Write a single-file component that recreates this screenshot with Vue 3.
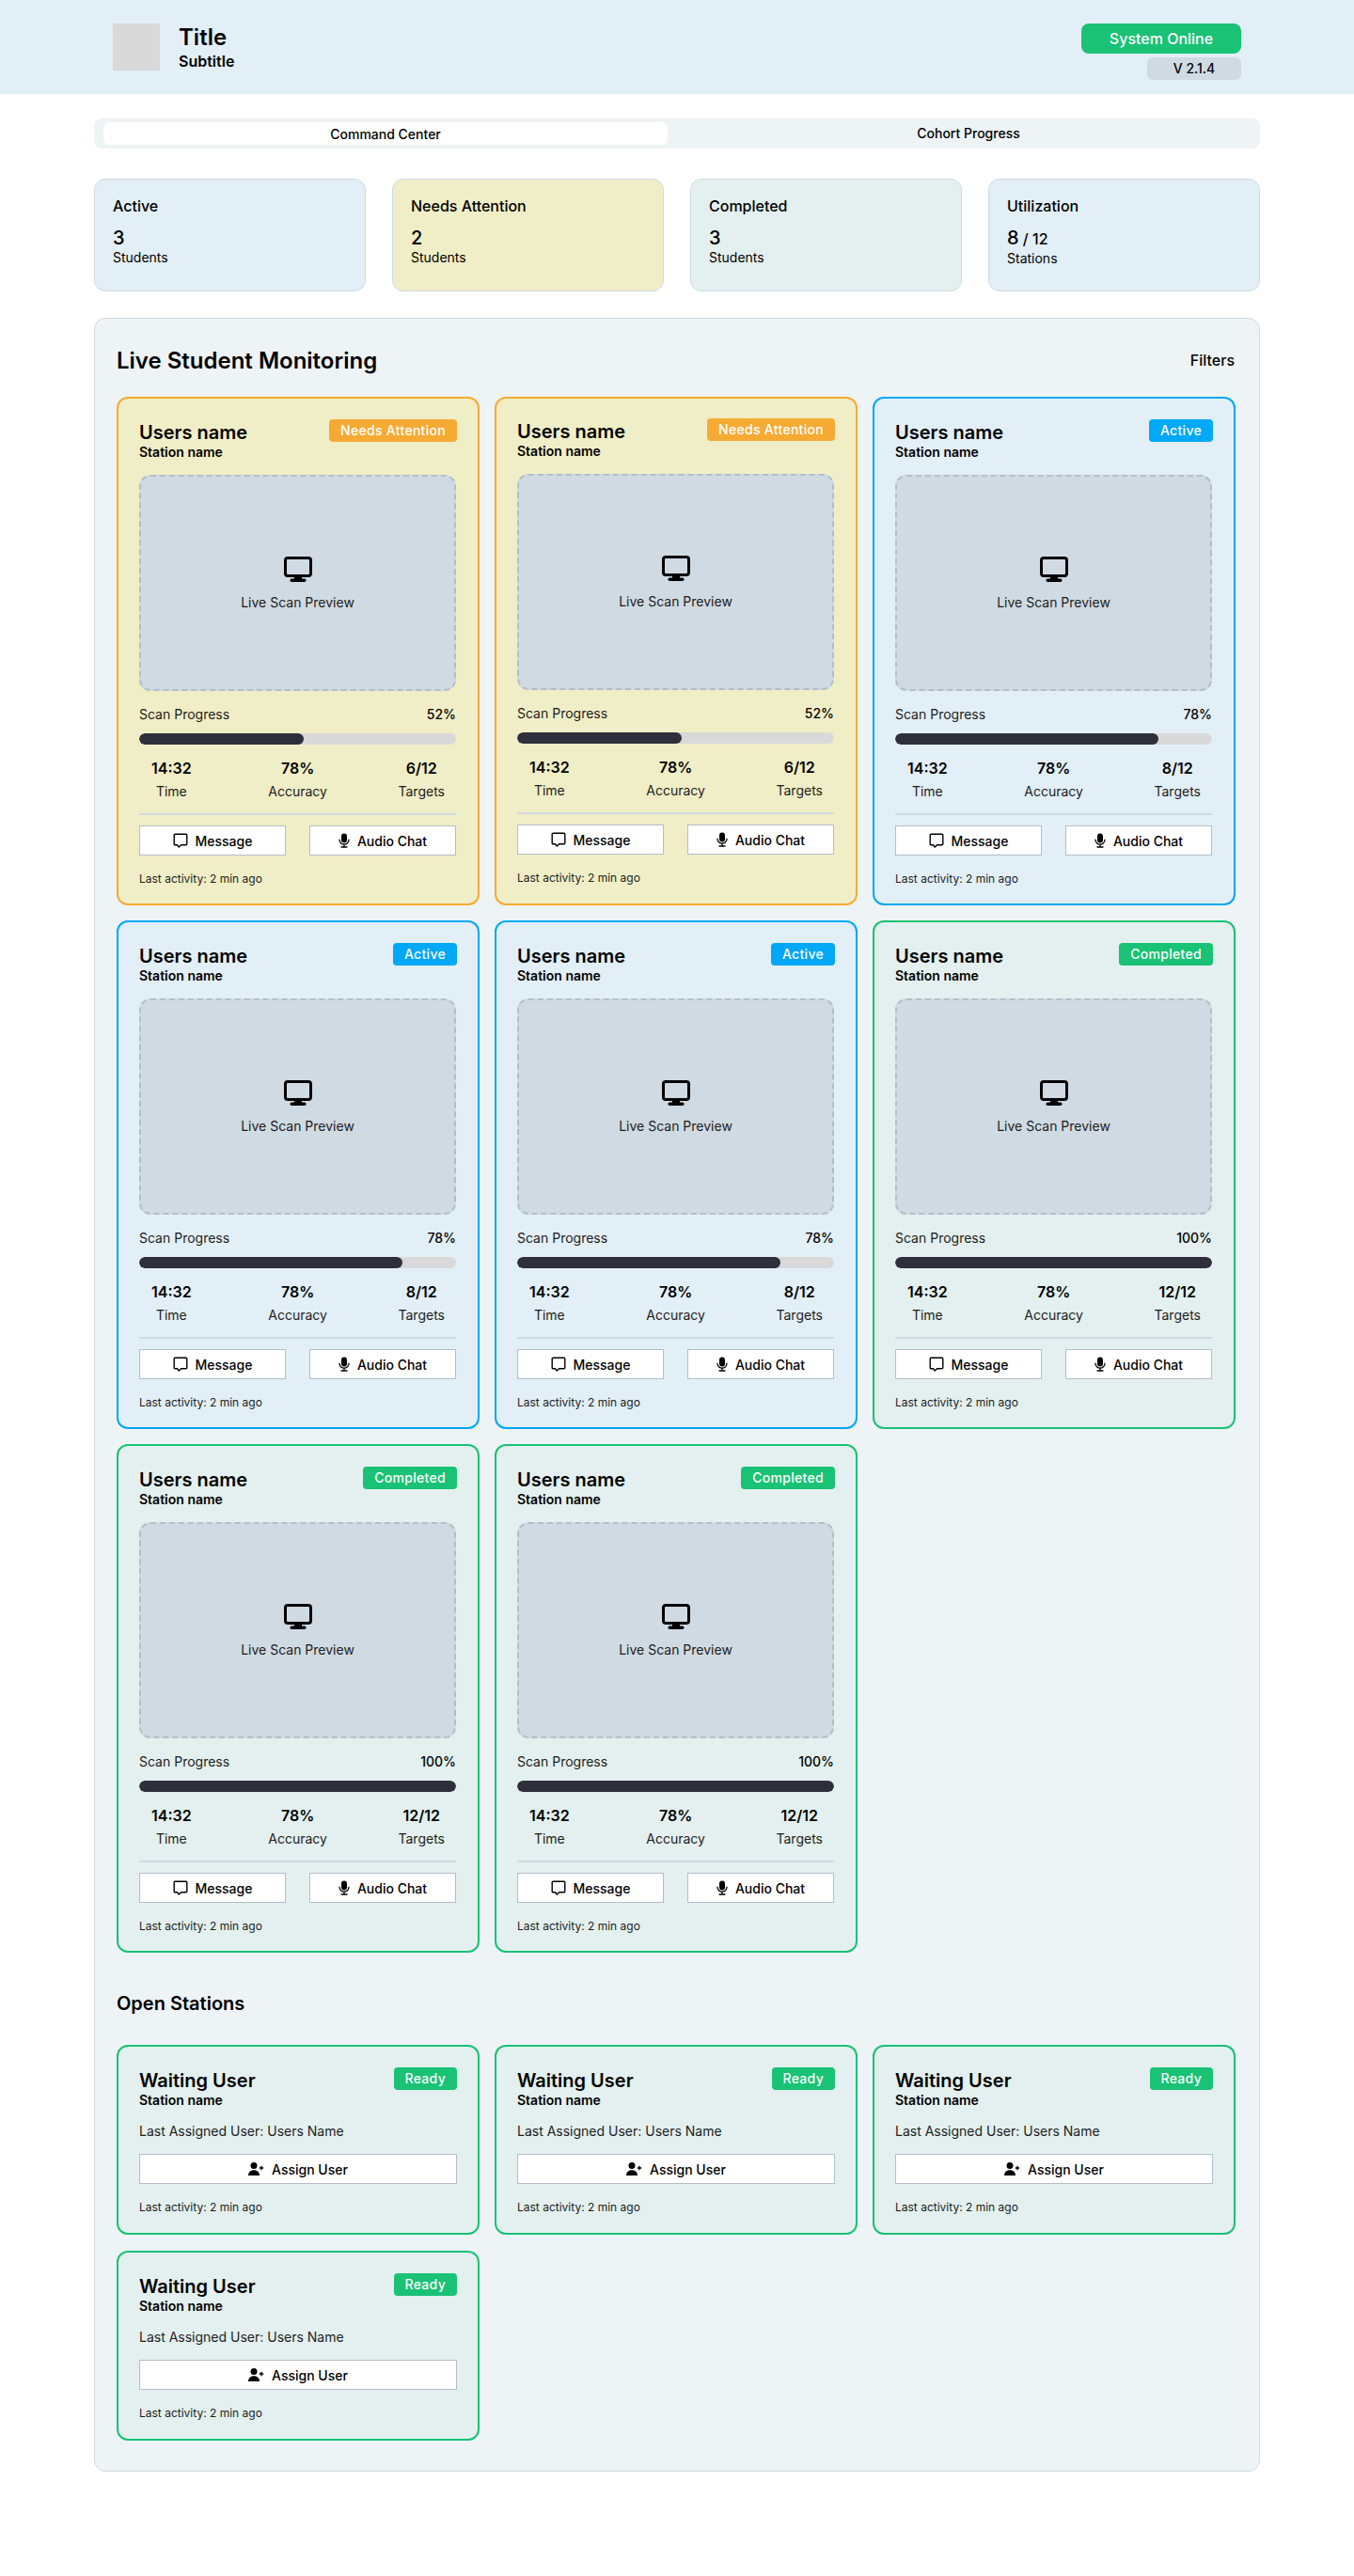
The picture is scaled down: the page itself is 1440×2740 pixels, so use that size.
<template>
  <div class="page">
    <header class="top">
      <div class="brand">
        <div class="logo"></div>
        <div class="brand-text">
          <h1>Title</h1>
          <p>Subtitle</p>
        </div>
      </div>
      <div class="status">
        <div class="online">System Online</div>
        <div class="version">V 2.1.4</div>
      </div>
    </header>

    <main class="content">
      <nav class="tabs">
        <div class="tab on">Command Center</div>
        <div class="tab">Cohort Progress</div>
      </nav>

      <section class="stats">
        <div v-for="s in stats" :key="s.label" class="stat" :class="s.tone">
          <div class="stat-label">{{ s.label }}</div>
          <div class="stat-num">{{ s.num }}<small v-if="s.of"> / {{ s.of }}</small></div>
          <div class="stat-unit">{{ s.unit }}</div>
        </div>
      </section>

      <section class="panel">
        <div class="panel-head">
          <h2>Live Student Monitoring</h2>
          <span class="filters">Filters</span>
        </div>

        <div class="grid students">
          <article v-for="(c, i) in students" :key="i" class="card" :class="c.tone">
            <div class="card-head">
              <div class="who">
                <div class="name">Users name</div>
                <div class="station">Station name</div>
              </div>
              <span class="badge">{{ c.label }}</span>
            </div>

            <div class="preview">
              <svg width="30" height="28" viewBox="0 0 30 28" fill="none">
                <rect x="1.5" y="1.5" width="27" height="19" rx="2.5" stroke="currentColor" stroke-width="3" />
                <path d="M11 21.5h8v2.5h-8z" fill="currentColor" />
                <rect x="6.5" y="23.5" width="17" height="3.5" rx="1.75" fill="currentColor" />
              </svg>
              <span>Live Scan Preview</span>
            </div>

            <div class="progress-row">
              <span>Scan Progress</span>
              <b>{{ c.progress }}%</b>
            </div>
            <div class="track">
              <div class="fill" :style="{ width: c.bar + '%' }"></div>
            </div>

            <div class="metrics">
              <div><b>14:32</b><span>Time</span></div>
              <div><b>78%</b><span>Accuracy</span></div>
              <div><b>{{ c.targets }}/12</b><span>Targets</span></div>
            </div>

            <div class="actions">
              <button>
                <svg width="16" height="16" viewBox="0 0 16 16" fill="none">
                  <path d="M2.2 1.2h11.6a1 1 0 0 1 1 1v9.6a1 1 0 0 1-1 1H8.6l-2.3 2.2-1.8-2.2H2.2a1 1 0 0 1-1-1V2.2a1 1 0 0 1 1-1z" stroke="currentColor" stroke-width="1.4" stroke-linejoin="round" />
                </svg>
                Message
              </button>
              <button>
                <svg width="12" height="16" viewBox="0 0 12 16" fill="none">
                  <rect x="3" y="0.5" width="6" height="10" rx="3" fill="currentColor" />
                  <path d="M1 7.2a5 5 0 0 0 10 0M6 12.2v2.3M3 15h6" stroke="currentColor" stroke-width="1.3" stroke-linecap="round" />
                </svg>
                Audio Chat
              </button>
            </div>

            <div class="activity">Last activity: 2 min ago</div>
          </article>
        </div>

        <h3>Open Stations</h3>

        <div class="grid open">
          <article v-for="n in 4" :key="n" class="card completed">
            <div class="card-head">
              <div class="who">
                <div class="name">Waiting User</div>
                <div class="station">Station name</div>
              </div>
              <span class="badge">Ready</span>
            </div>
            <div class="assigned">Last Assigned User: Users Name</div>
            <button class="assign">
              <svg width="17" height="14" viewBox="0 0 17 14" fill="none">
                <circle cx="6" cy="3.6" r="3.5" fill="currentColor" />
                <path d="M0 14c0-3.6 2.4-5.8 6-5.8s6 2.2 6 5.8z" fill="currentColor" />
                <path d="M14 3.8v4.4M11.8 6h4.4" stroke="currentColor" stroke-width="1.3" />
              </svg>
              Assign User
            </button>
            <div class="activity">Last activity: 2 min ago</div>
          </article>
        </div>
      </section>
    </main>
  </div>
</template>

<script setup>
const stats = [
  { label: 'Active', num: 3, unit: 'Students', tone: 'active' },
  { label: 'Needs Attention', num: 2, unit: 'Students', tone: 'attention' },
  { label: 'Completed', num: 3, unit: 'Students', tone: 'completed' },
  { label: 'Utilization', num: 8, of: 12, unit: 'Stations', tone: 'active' }
]

const attention = { tone: 'attention', label: 'Needs Attention', progress: 52, bar: 52, targets: 6 }
const active = { tone: 'active', label: 'Active', progress: 78, bar: 83, targets: 8 }
const completed = { tone: 'completed', label: 'Completed', progress: 100, bar: 100, targets: 12 }

const students = [attention, attention, active, active, active, completed, completed, completed]
</script>

<style>
body {
  margin: 0;
  background: #fff;
}
</style>

<style scoped>
.page {
  min-height: 2740px;
  font-family: Inter, "Liberation Sans", sans-serif;
  color: #000;
}

.top {
  height: 100px;
  box-sizing: border-box;
  padding: 25px 120px 0;
  display: flex;
  justify-content: space-between;
  align-items: flex-start;
  background: #e2eff7;
}

.brand {
  display: flex;
  gap: 20px;
  align-items: center;
}

.logo {
  width: 50px;
  height: 50px;
  background: #d9d9d9;
}

.brand-text {
  display: flex;
  flex-direction: column;
  gap: 2px;
}

h1 {
  margin: 0;
  font-size: 24px;
  line-height: 29px;
  font-weight: 600;
}

.brand p {
  margin: 0;
  font-size: 16px;
  line-height: 19px;
  font-weight: 600;
}

.status {
  display: flex;
  flex-direction: column;
  align-items: flex-end;
  gap: 4px;
}

.online {
  width: 170px;
  height: 32px;
  line-height: 32px;
  text-align: center;
  border-radius: 8px;
  background: #19c275;
  color: #fff;
  font-size: 16px;
  font-weight: 500;
}

.version {
  width: 100px;
  height: 24px;
  line-height: 24px;
  text-align: center;
  border-radius: 6px;
  background: #d0dae2;
  font-size: 14px;
  font-weight: 500;
}

.content {
  padding: 26px 100px 0;
}

.tabs {
  height: 32px;
  box-sizing: border-box;
  padding: 4px 10px;
  display: grid;
  grid-template-columns: 1fr 1fr;
  gap: 20px;
  border-radius: 8px;
  background: #eef3f6;
}

.tab {
  text-align: center;
  font-size: 14px;
  line-height: 24px;
  font-weight: 500;
  border-radius: 6px;
}

.tab.on {
  line-height: 26px;
  height: 24px;
  background: #fff;
}

.stats {
  margin-top: 32px;
  display: grid;
  grid-template-columns: repeat(4, 1fr);
  gap: 28px;
}

.stat {
  height: 120px;
  box-sizing: border-box;
  padding: 19px;
  border: 1px solid #d0dae2;
  border-radius: 12px;
}

.stat.active { background: #e2eff7; }
.stat.attention { background: #f0eec6; }
.stat.completed { background: #e3f0ef; }

.stat-label {
  font-size: 16px;
  line-height: 19px;
  font-weight: 500;
}

.stat-num {
  margin-top: 12px;
  font-size: 20px;
  line-height: 24px;
  font-weight: 500;
}

.stat-num small {
  font-size: 16px;
}

.stat-unit {
  font-size: 14px;
  line-height: 17px;
}

.panel {
  margin-top: 28px;
  padding: 24px 25px 32px 23px;
  border: 1px solid #d0dae2;
  border-radius: 12px;
  background: #eef3f6;
}

.panel-head {
  height: 40px;
  margin-bottom: 19px;
  display: flex;
  justify-content: space-between;
  align-items: center;
}

h2 {
  margin: 0;
  font-size: 24px;
  font-weight: 600;
}

.filters {
  margin-right: 1px;
  font-size: 16px;
  font-weight: 500;
}

.grid {
  display: grid;
  grid-template-columns: repeat(3, 1fr);
  gap: 16px;
}

.grid.open {
  row-gap: 17px;
}

.card {
  box-sizing: border-box;
  padding: 22px 22px 20px;
  border: 2px solid;
  border-radius: 12px;
}

.students .card {
  padding-bottom: 19px;
}

/* the second card of the first row sits a pixel higher in the design */
.students .card:nth-child(2) {
  padding-top: 21px;
  padding-bottom: 20px;
}

.card.attention { background: #f0eec6; border-color: #f5ab33; }
.card.active { background: #e2eff7; border-color: #00a8f5; }
.card.completed { background: #e3f0ef; border-color: #19c275; }

.card-head {
  display: flex;
  justify-content: space-between;
  align-items: flex-start;
}

.who {
  margin-top: 2px;
}

.name {
  font-size: 20px;
  line-height: 24px;
  font-weight: 600;
}

.station {
  font-size: 14px;
  line-height: 17px;
  font-weight: 600;
}

.badge {
  height: 24px;
  padding: 0 12px;
  line-height: 24px;
  border-radius: 4px;
  color: #fff;
  font-size: 14px;
  font-weight: 500;
  letter-spacing: 0.3px;
}

.attention .badge { background: #f5ab33; }
.active .badge { background: #00a8f5; }
.completed .badge { background: #19c275; }

.preview,
.progress-row,
.track,
.metrics,
.actions {
  margin-right: 1px;
}

.preview {
  height: 230px;
  box-sizing: border-box;
  margin-top: 16px;
  display: flex;
  flex-direction: column;
  align-items: center;
  justify-content: center;
  gap: 12px;
  border: 2px dashed #b4bec8;
  border-radius: 12px;
  background: #d0dae2;
  font-size: 14px;
  color: #1c1c1c;
}

.preview svg {
  color: #000;
}

.progress-row {
  margin-top: 16px;
  display: flex;
  justify-content: space-between;
  font-size: 14px;
  line-height: 17px;
  color: #1c1c1c;
}

.progress-row b {
  font-weight: 500;
  color: #000;
}

.track {
  margin-top: 12px;
  height: 12px;
  border-radius: 6px;
  background: #d9d9d9;
  overflow: hidden;
}

.fill {
  height: 100%;
  border-radius: 6px;
  background: #2e2f3a;
}

.metrics {
  margin-top: 16px;
  padding: 0 12px 15px 13px;
  display: flex;
  justify-content: space-between;
  border-bottom: 2px solid #d0dae2;
}

.metrics div {
  display: flex;
  flex-direction: column;
  align-items: center;
  gap: 6px;
}

.metrics div:nth-child(2) {
  margin-left: 6px;
}

.metrics b {
  font-size: 16px;
  line-height: 19px;
  font-weight: 600;
}

.metrics span {
  font-size: 14px;
  line-height: 17px;
  color: #1c1c1c;
}

.actions {
  margin-top: 11px;
  display: grid;
  grid-template-columns: 1fr 1fr;
  gap: 25px;
}

button {
  height: 32px;
  padding: 0;
  display: flex;
  align-items: center;
  justify-content: center;
  gap: 8px;
  border: 1px solid #b4bec8;
  border-radius: 0;
  background: #fff;
  color: #000;
  font-family: inherit;
  font-size: 14px;
  font-weight: 500;
}

.activity {
  margin-top: 17px;
  font-size: 12px;
  line-height: 15px;
  color: #1c1c1c;
}

h3 {
  margin: 42px 0 32px;
  font-size: 20px;
  line-height: 24px;
  font-weight: 600;
}

.assigned {
  margin-top: 16px;
  font-size: 14px;
  line-height: 17px;
  color: #1c1c1c;
}

.assign {
  width: 100%;
  margin-top: 16px;
}
</style>
